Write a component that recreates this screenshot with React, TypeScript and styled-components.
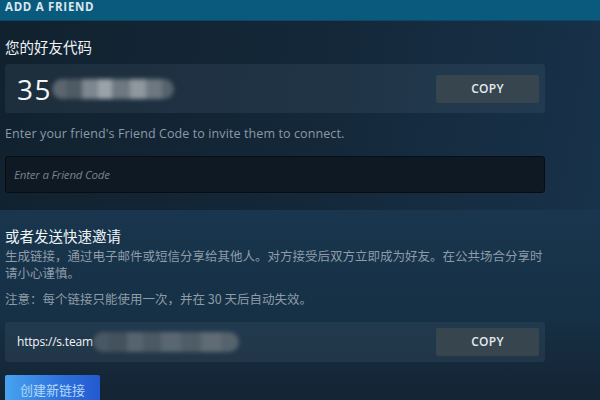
import styled, { createGlobalStyle } from 'styled-components';

const GlobalStyle = createGlobalStyle`
  html, body {
    margin: 0;
    padding: 0;
    background: #132433;
  }
  body {
    font-family: "Open Sans", "Noto Sans", "Noto Sans CJK SC", sans-serif;
    overflow: hidden;
  }
`;

const Page = styled.div`
  width: 600px;
  height: 400px;
  overflow: hidden;
  display: flex;
  flex-direction: column;
`;

const Header = styled.div`
  height: 20px;
  flex-shrink: 0;
  background: #0a5a7e;
  border-bottom: 1px solid #0a4864;
  padding: 0 5px;
  color: #dbe7ee;
  font-size: 11.5px;
  font-weight: 700;
  line-height: 13px;
  letter-spacing: 0.7px;
`;

const Section = styled.section<{ $bg: string; $grow?: boolean }>`
  padding: 16px 5px 17px;
  background: ${(p) => p.$bg};
  flex-grow: ${(p) => (p.$grow ? 1 : 0)};
  flex-shrink: 0;
`;

const Heading = styled.h2`
  margin: 0;
  font-family: "Noto Sans CJK SC", "Noto Sans", sans-serif;
  font-size: 14.5px;
  font-weight: 400;
  line-height: 20px;
  color: #eef3f6;
`;

const Box = styled.div<{ $h: number }>`
  width: 540px;
  height: ${(p) => p.$h}px;
  box-sizing: border-box;
  padding: 0 6px 0 12px;
  display: flex;
  align-items: center;
  background: rgba(150, 180, 200, 0.09);
  border-radius: 3px;
`;

const CodeText = styled.span<{ $size: number }>`
  font-size: ${(p) => p.$size}px;
  font-weight: ${(p) => (p.$size > 20 ? 400 : 500)};
  color: #f2f5f7;
  letter-spacing: ${(p) => (p.$size > 20 ? 1.5 : -0.2)}px;
  white-space: nowrap;
`;

const Redacted = styled.div`
  display: flex;
  height: 20px;
  filter: blur(2px);
  border-radius: 10px;
  overflow: hidden;
`;

const Cell = styled.div<{ $c: string; $w: number }>`
  width: ${(p) => p.$w}px;
  height: 100%;
  background: ${(p) => p.$c};
`;

const CopyButton = styled.button`
  margin-left: auto;
  width: 103px;
  height: 28px;
  border: none;
  border-radius: 2px;
  background: #37454f;
  color: #e4ebf0;
  font-family: "Open Sans", "Noto Sans", sans-serif;
  font-size: 12px;
  font-weight: 600;
  letter-spacing: 0.3px;
  cursor: pointer;
`;

const Hint = styled.p<{ $mt: number }>`
  margin: ${(p) => p.$mt}px 0 0;
  width: 540px;
  font-family: "Open Sans", "Noto Sans", "Noto Sans CJK SC", sans-serif;
  font-size: 12.5px;
  letter-spacing: 0.1px;
  line-height: 16px;
  color: #8b9aa6;
`;

const CjkHint = styled(Hint)`
  font-family: "Noto Sans CJK SC", "Noto Sans", sans-serif;
  font-size: 12.5px;
  letter-spacing: 0;
  line-height: 16.5px;
  color: #8d9ca8;
`;

const Input = styled.input`
  display: block;
  margin-top: 14px;
  width: 540px;
  height: 37px;
  box-sizing: border-box;
  padding: 0 8px;
  background: #0e1923;
  border: 1px solid #070d13;
  border-radius: 3px;
  color: #dfe6ea;
  font-family: "Open Sans", "Noto Sans", sans-serif;
  font-size: 11.5px;
  letter-spacing: -0.2px;
  outline: none;
  &::placeholder {
    color: #76838e;
    font-style: italic;
  }
`;

const CreateButton = styled.button`
  display: block;
  margin-top: 13px;
  width: 95px;
  height: 30px;
  border: none;
  border-radius: 2px;
  background: linear-gradient(90deg, #47a3f0 0%, #2f74dd 55%, #2459d0 100%);
  color: #b3d8f8;
  font-family: "Noto Sans CJK SC", "Noto Sans", sans-serif;
  font-size: 13px;
  cursor: pointer;
`;

const codeMask = [
  ['#5b666f', 14],
  ['#4f5b64', 16],
  ['#7d878f', 16],
  ['#9aa3aa', 14],
  ['#6d7880', 18],
  ['#8f989f', 16],
  ['#6e7880', 16],
  ['#56626b', 12],
] as const;

const linkMask = [
  ['#4a5863', 16],
  ['#44525d', 18],
  ['#56646e', 16],
  ['#4b5963', 18],
  ['#5a6771', 20],
  ['#4f5d67', 20],
  ['#5f6c75', 20],
  ['#56636d', 18],
] as const;

const App = () => {
  return (
    <Page>
      <GlobalStyle />
      <Header>ADD A FRIEND</Header>
      <Section $bg="linear-gradient(100deg, #11212e 0%, #14283a 55%, #18324a 100%)">
        <Heading>您的好友代码</Heading>
        <Box $h={49} style={{ marginTop: 7 }}>
          <CodeText $size={28}>35</CodeText>
          <Redacted>
            {codeMask.map(([c, w], i) => (
              <Cell key={i} $c={c} $w={w} />
            ))}
          </Redacted>
          <CopyButton>COPY</CopyButton>
        </Box>
        <Hint $mt={13}>Enter your friend's Friend Code to invite them to connect.</Hint>
        <Input placeholder="Enter a Friend Code" />
      </Section>
      <Section $grow $bg="linear-gradient(180deg, #19364e 0%, #163045 50%, #13212f 100%)">
        <Heading>或者发送快速邀请</Heading>
        <CjkHint $mt={2}>
          生成链接，通过电子邮件或短信分享给其他人。对方接受后双方立即成为好友。在公共场合分享时请小心谨慎。
        </CjkHint>
        <CjkHint $mt={10}>注意：每个链接只能使用一次，并在 30 天后自动失效。</CjkHint>
        <Box $h={40} style={{ marginTop: 14 }}>
          <CodeText $size={12}>https://s.team</CodeText>
          <Redacted>
            {linkMask.map(([c, w], i) => (
              <Cell key={i} $c={c} $w={w} />
            ))}
          </Redacted>
          <CopyButton>COPY</CopyButton>
        </Box>
        <CreateButton>创建新链接</CreateButton>
      </Section>
    </Page>
  );
};

export default App;
